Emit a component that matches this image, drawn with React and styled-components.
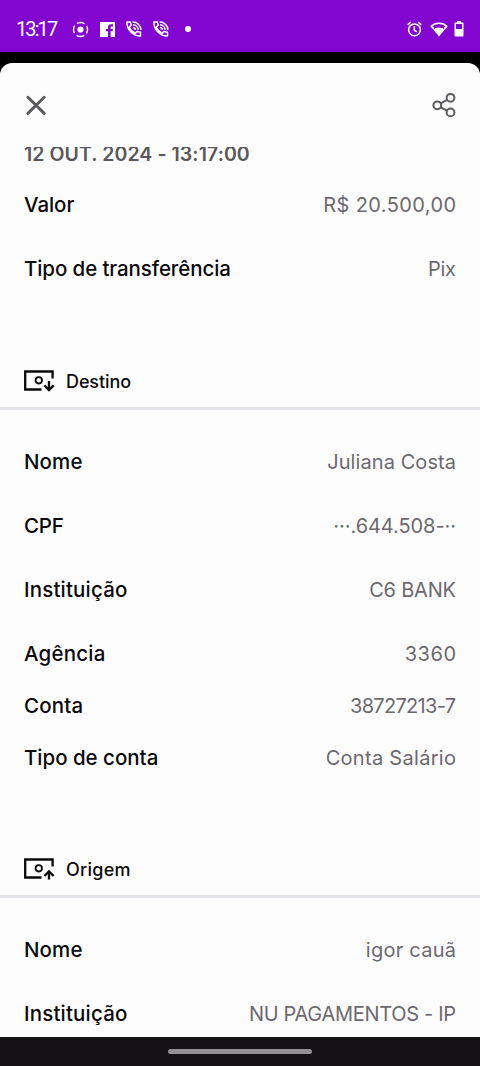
import React from "react";
import styled, { createGlobalStyle } from "styled-components";

const Global = createGlobalStyle`
  * { box-sizing: border-box; }
  body { margin: 0; background: #000; font-family: Inter, "Liberation Sans", sans-serif; }
  svg { display: block; flex: none; }
`;

const Screen = styled.div`
  width: 480px;
  height: 1066px;
  display: flex;
  flex-direction: column;
  overflow: hidden;
  background: #000;
`;

const StatusBar = styled.header`
  flex: none;
  height: 52px;
  margin-bottom: 11px;
  padding: 6px 16px 0 16px;
  display: flex;
  align-items: center;
  background: #8206cf;
  color: #fff;
`;

const Clock = styled.span`
  width: 56px;
  font-family: Roboto, sans-serif;
  font-size: 20px;
  line-height: 24px;
  letter-spacing: -1.9px;
`;

const StatusIcons = styled.div`
  display: flex;
  align-items: center;
  gap: ${(p) => p.$gap}px;
  margin-left: ${(p) => (p.$end ? "auto" : 0)};
`;

const Dot = styled.span`
  width: 6px;
  height: 6px;
  margin-left: 5px;
  border-radius: 50%;
  background: #fff;
`;

const Sheet = styled.main`
  flex: 1;
  min-height: 0;
  display: flex;
  flex-direction: column;
  border-radius: 12px 12px 0 0;
  background: #fefdfe;
  overflow: hidden;
`;

const Toolbar = styled.div`
  flex: none;
  height: 84px;
  padding: 0 24px;
  display: flex;
  align-items: center;
  justify-content: space-between;
  color: #5b595d;
`;

const IconButton = styled.button`
  padding: 0;
  border: 0;
  background: none;
  color: inherit;
`;

const Content = styled.div`
  flex: 1;
  min-height: 0;
  overflow: hidden;
`;

const Timestamp = styled.p`
  margin: -4px 24px 26px;
  font-size: 19.5px;
  font-weight: 600;
  line-height: 22px;
  letter-spacing: ${(p) => p.$track}px;
  white-space: nowrap;
  color: #59575b;
`;

const Rows = styled.dl`
  margin: 0;
  padding: 0 24px;
  display: flex;
  flex-direction: column;
`;

const Row = styled.div`
  height: 28px;
  margin-bottom: ${(p) => (p.$tight ? 24 : 36)}px;
  display: flex;
  align-items: center;
  justify-content: space-between;
  font-size: 20px;
  line-height: 28px;
  white-space: nowrap;
`;

const Label = styled.dt`
  font-size: 20.5px;
  font-weight: 550;
  letter-spacing: ${(p) => p.$track}px;
  color: #0a090b;
`;

const Value = styled.dd`
  margin: 0 ${(p) => -p.$track}px 0 0;
  font-weight: 400;
  letter-spacing: ${(p) => p.$track}px;
  color: #6b696e;
`;

const SectionHeader = styled.h2`
  height: 58px;
  margin: ${(p) => p.$top}px 0 38px;
  padding: 2px 24px 0;
  display: flex;
  align-items: center;
  gap: 11px;
  border-bottom: 3px solid #e5e2e7;
  font-size: 18px;
  font-weight: 550;
  letter-spacing: ${(p) => p.$track}px;
  color: #0a090b;
`;

const SectionTitle = styled.span`
  padding-top: 1px;
`;

const NavBar = styled.footer`
  flex: none;
  height: 29px;
  display: flex;
  align-items: center;
  justify-content: center;
  background: #131114;
`;

const Handle = styled.span`
  width: 144px;
  height: 5px;
  border-radius: 3px;
  background: #929093;
`;

const RecordIcon = () => (
  <svg width="17" height="17" viewBox="0 0 17 17" fill="none">
    <circle cx="8.5" cy="8.5" r="3.1" fill="#fff" />
    <circle cx="8.5" cy="8.5" r="7" stroke="#fff" strokeWidth="1.4" strokeDasharray="8 2.995" strokeDashoffset="4" />
  </svg>
);

const FacebookIcon = () => (
  <svg width="15" height="15" viewBox="0 0 15 15">
    <path fill="#fff" d="M0 0h15v15h-4.400V9.300h2.100l.3-2.300h-2.400V5.600c0-.7.300-1.100 1.200-1.100H13V2.300h-1.800C9.100 2.300 8 3.500 8 5.400V7H6v2.300h2V15H0z" />
  </svg>
);

const CallIcon = () => (
  <svg width="16" height="16" viewBox="0 0 16 16" fill="none" stroke="#fff" strokeWidth="1.5" strokeLinejoin="round">
    <path d="M.9 1H4.300l.9 3.300-2 2c1.300 2.700 3.200 4.700 6 6l1.900-1.900 3.400.9V15C7.200 15.200.7 8.800.9 1z" />
    <path d="M6.600 1C11 .8 15 4.600 14.900 9M6.900 3.800c2.900.1 5.100 2.200 5.200 5.100M7 6.500c1.400.1 2.300 1 2.400 2.400" />
  </svg>
);

const AlarmIcon = () => (
  <svg width="15" height="16" viewBox="0 0 15 16" fill="none" stroke="#fff" strokeWidth="1.500">
    <circle cx="7.500" cy="8.800" r="5.900" />
    <path d="M7.300 5.300v3.900l2.600 1.600M.7 3.800 3.800 1.100M14.300 3.800 11.200 1.100" />
  </svg>
);

const WifiIcon = () => (
  <svg width="20" height="15" viewBox="-2 0 20 15">
    <path fill="#fff" d="M3.200 7.500C6.600 4.800 11.400 4.800 14.800 7.500L9 14.600z" />
    <path fill="none" stroke="#fff" strokeWidth="1.600" d="M.9 4.500C5.400.2 12.600.2 17.100 4.500" />
    <path fill="#fff" d="M.4 4.400 2 3.400 4.200 6 3.200 7.500zM17.600 4.400 16 3.400 13.800 6l1 1.500z" />
  </svg>
);

const BatteryIcon = () => (
  <svg width="10" height="16" viewBox="0 0 10 16">
    <path fill="#fff" fillRule="evenodd" d="M3 0h4v1.400h1.700c.5 0 .8.300.8.800v12.500c0 .5-.3.800-.8.800H1.300c-.5 0-.8-.3-.8-.8V2.200c0-.5.3-.8.8-.8H3zM2 3v5h6V3z" />
  </svg>
);

const CloseIcon = () => (
  <svg width="24" height="24" viewBox="0 0 24 24" fill="none" stroke="currentColor" strokeWidth="2.900" strokeLinecap="round">
    <path d="M3.900 4.200 20.200 20.400M20.200 4.200 3.900 20.400" />
  </svg>
);

const ShareIcon = () => (
  <svg width="24" height="26" viewBox="0 0 24 26" fill="none" stroke="currentColor" strokeWidth="2">
    <circle cx="5.300" cy="13.300" r="3.900" />
    <circle cx="18.500" cy="5.800" r="3.900" />
    <circle cx="18.500" cy="20.400" r="3.900" />
    <path d="M8.800 11.400 15 7.900M8.800 15.400l6.200 3.300" />
  </svg>
);

const MoneyIcon = ({ up }) => (
  <svg width="31" height="24" viewBox="0 0 31 24" fill="none" stroke="#0a090b" strokeWidth="2.300">
    <path d="M17.500 20.500H1.200V2.500h27.400v7" />
    <circle cx="14.800" cy="11.300" r="3.200" strokeWidth="1.800" />
    <path d={up ? "M25 22.500v-8M20.400 19 25 14.400l4.600 4.600" : "M25 12v9M20.400 16.400 25 21l4.600-4.600"} />
  </svg>
);

const Fields = ({ items }) => (
  <Rows>
    {items.map(([label, labelTrack, value, valueTrack, tight]) => (
      <Row key={label} $tight={tight}>
        <Label $track={labelTrack}>{label}</Label>
        <Value $track={valueTrack}>{value}</Value>
      </Row>
    ))}
  </Rows>
);

const summary = [
  ["Valor", -0.05, "R$ 20.500,00", 0.38],
  ["Tipo de transferência", -0.1, "Pix", -0.3],
];

const destination = [
  ["Nome", 0.1, "Juliana Costa", 0.08],
  ["CPF", -0.2, "···.644.508-··", -0.06],
  ["Instituição", 0.17, "C6 BANK", -0.2],
  ["Agência", 0.2, "3360", 0.5, true],
  ["Conta", 0.15, "38727213-7", -0.7, true],
  ["Tipo de conta", -0.02, "Conta Salário", 0.3],
];

const origin = [
  ["Nome", 0.1, "igor cauã", 0.25],
  ["Instituição", 0.17, "NU PAGAMENTOS - IP", -0.32],
];

export default function App() {
  return (
    <>
      <Global />
      <Screen>
        <StatusBar>
          <Clock>13:17</Clock>
          <StatusIcons $gap={11}>
            <RecordIcon />
            <FacebookIcon />
            <CallIcon />
            <CallIcon />
            <Dot />
          </StatusIcons>
          <StatusIcons $end $gap={6}>
            <AlarmIcon />
            <WifiIcon />
            <BatteryIcon />
          </StatusIcons>
        </StatusBar>
        <Sheet>
          <Toolbar>
            <IconButton aria-label="Fechar"><CloseIcon /></IconButton>
            <IconButton aria-label="Compartilhar"><ShareIcon /></IconButton>
          </Toolbar>
          <Content>
            <Timestamp $track={0.08}>12 OUT. 2024 - 13:17:00</Timestamp>
            <Fields items={summary} />
            <SectionHeader $top={33} $track={-0.1}>
              <MoneyIcon />
              <SectionTitle>Destino</SectionTitle>
            </SectionHeader>
            <Fields items={destination} />
            <SectionHeader $top={32} $track={0.25}>
              <MoneyIcon up />
              <SectionTitle>Origem</SectionTitle>
            </SectionHeader>
            <Fields items={origin} />
          </Content>
        </Sheet>
        <NavBar>
          <Handle />
        </NavBar>
      </Screen>
    </>
  );
}
